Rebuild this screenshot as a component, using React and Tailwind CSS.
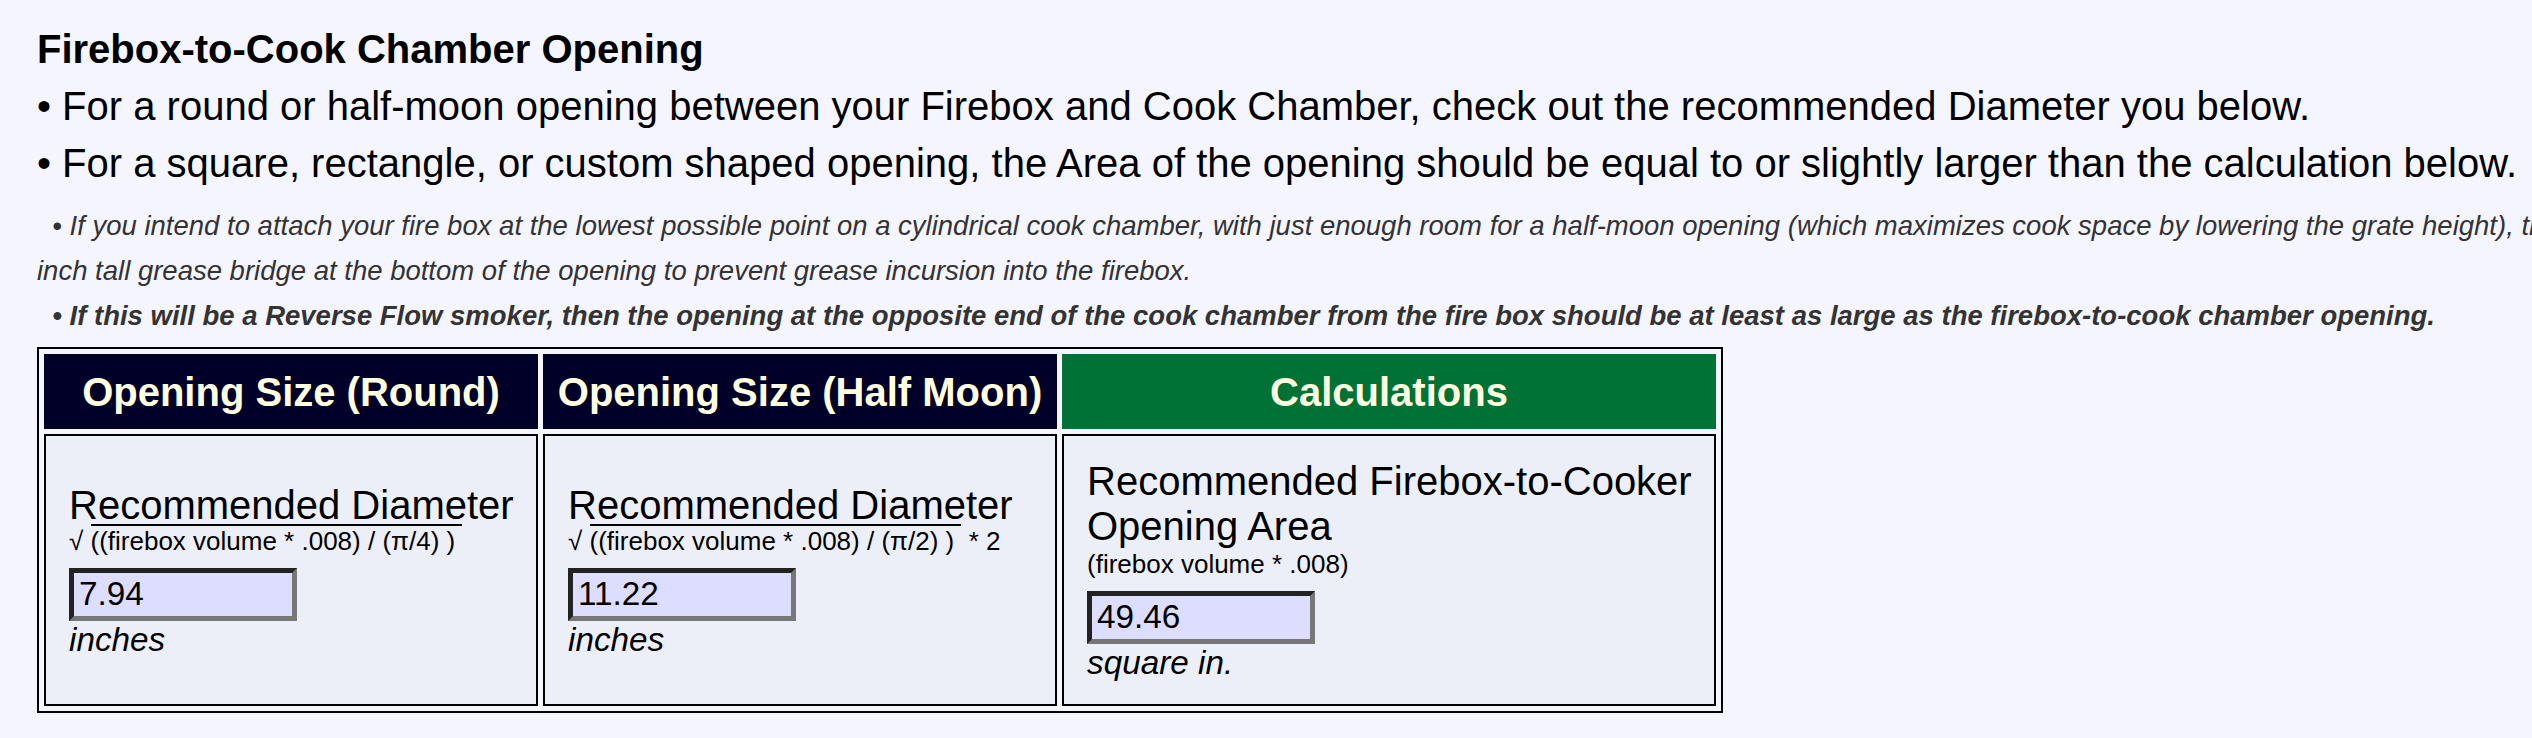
import React from 'react';

// Read-only value box styled like the classic inset text input
function ValueBox({ value }) {
  return (
    <input
      readOnly
      value={value}
      className="block w-[228px] h-[53px] border-[5px] border-t-[#222222] border-l-[#222222] border-b-[#777777] border-r-[#777777] bg-[#ddddff] pl-[5px] text-[33.3px] leading-[38px] text-black font-['Liberation_Sans',Arial,sans-serif] outline-none"
    />
  );
}

function HeaderCell({ children, green }) {
  return (
    <div
      className={
        green
          ? 'flex items-center justify-center bg-[#007236] text-[#ffffe0] font-bold text-[40px]'
          : 'flex items-center justify-center bg-[#000028] text-[#ffffe0] font-bold text-[40px]'
      }
    >
      {children}
    </div>
  );
}

function BodyCell({ children }) {
  return (
    <div className="flex flex-col justify-center border-2 border-black bg-[#eceff8] pl-[23px]">
      {children}
    </div>
  );
}

// "√ (...)" with the vinculum drawn as a top border on the radicand
function Formula({ radicand, tail }) {
  return (
    <div className="-mt-[2px] text-[26px] leading-[30px] whitespace-nowrap">
      √ <span className="border-t-2 border-black">{radicand}&nbsp;</span>
      {tail && <span> {tail}</span>}
    </div>
  );
}

export default function App() {
  return (
    <div className="w-full min-h-screen overflow-hidden bg-[#f5f5ff] text-black font-['Liberation_Sans',Arial,sans-serif]">
      <div className="pl-[37px] pt-[21px]">
        {/* Intro */}
        <div className="text-[40px] leading-[57px] whitespace-nowrap">
          <div className="font-bold">Firebox-to-Cook Chamber Opening</div>
          <div>• For a round or half-moon opening between your Firebox and Cook Chamber, check out the recommended Diameter you below.</div>
          <div>• For a square, rectangle, or custom shaped opening, the Area of the opening should be equal to or slightly larger than the calculation below.</div>
        </div>

        {/* Notes */}
        <div className="mt-[11px] text-[27.5px] leading-[45px] italic text-[#333333] whitespace-nowrap">
          <div>
            &nbsp;&nbsp;• If you intend to attach your fire box at the lowest possible point on a cylindrical cook chamber, with just enough room for a half-moon opening (which maximizes cook space by lowering the grate height), then you will need to add a 1
          </div>
          <div>inch tall grease bridge at the bottom of the opening to prevent grease incursion into the firebox.</div>
          <div className="font-bold">
            &nbsp;&nbsp;• If this will be a Reverse Flow smoker, then the opening at the opposite end of the cook chamber from the fire box should be at least as large as the firebox-to-cook chamber opening.
          </div>
        </div>

        {/* Results table */}
        <div className="mt-[9px] inline-grid grid-cols-[494px_514px_654px] grid-rows-[75px_272px] gap-[5px] p-[5px] border-2 border-black">
          <HeaderCell>Opening Size (Round)</HeaderCell>
          <HeaderCell>Opening Size (Half Moon)</HeaderCell>
          <HeaderCell green>Calculations</HeaderCell>

          <BodyCell>
            <div className="text-[40px] leading-[46px]">Recommended Diameter</div>
            <Formula radicand="((firebox volume * .008) / (π/4) )" />
            <div className="mt-[12px]">
              <ValueBox value="7.94" />
            </div>
            <div className="italic text-[33.3px] leading-[38px]">inches</div>
          </BodyCell>

          <BodyCell>
            <div className="text-[40px] leading-[46px]">Recommended Diameter</div>
            <Formula radicand="((firebox volume * .008) / (π/2) )" tail="* 2" />
            <div className="mt-[12px]">
              <ValueBox value="11.22" />
            </div>
            <div className="italic text-[33.3px] leading-[38px]">inches</div>
          </BodyCell>

          <BodyCell>
            <div className="text-[40px] leading-[45px] whitespace-nowrap">
              Recommended Firebox-to-Cooker
              <br />
              Opening Area
            </div>
            <div className="text-[26px] leading-[30px]">(firebox volume * .008)</div>
            <div className="mt-[12px]">
              <ValueBox value="49.46" />
            </div>
            <div className="italic text-[33.3px] leading-[38px]">square in.</div>
          </BodyCell>
        </div>
      </div>
    </div>
  );
}
